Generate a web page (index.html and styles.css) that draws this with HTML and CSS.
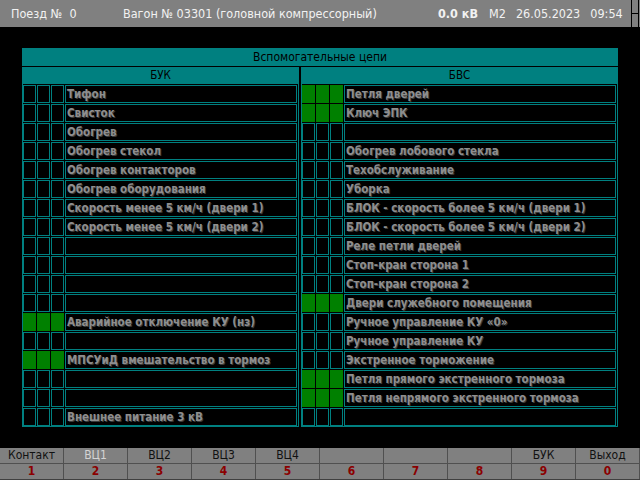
FILE: index.html
```html
<!DOCTYPE html>
<html lang="ru">
<head>
<meta charset="utf-8">
<title>Вспомогательные цепи</title>
<link rel="stylesheet" href="styles.css">
</head>
<body>
<div class="screen">
  <header class="topbar">
    <span class="train">Поезд №&nbsp; 0</span>
    <span class="wagon">Вагон № 03301 (головной компрессорный)</span>
    <span class="volt">0.0 кВ</span>
    <span class="mode">М2</span>
    <span class="date">26.05.2023</span>
    <span class="time">09:54</span>
    <span class="marker"></span>
  </header>

  <main class="panel">
    <div class="panel-title">Вспомогательные цепи</div>
    <div class="sections">
      <section class="section left">
        <div class="section-head">БУК</div>
        <div class="grid">
          <div class="c"></div><div class="c"></div><div class="c"></div><div class="t">Тифон</div>
          <div class="c"></div><div class="c"></div><div class="c"></div><div class="t">Свисток</div>
          <div class="c"></div><div class="c"></div><div class="c"></div><div class="t">Обогрев</div>
          <div class="c"></div><div class="c"></div><div class="c"></div><div class="t">Обогрев стекол</div>
          <div class="c"></div><div class="c"></div><div class="c"></div><div class="t">Обогрев контакторов</div>
          <div class="c"></div><div class="c"></div><div class="c"></div><div class="t">Обогрев оборудования</div>
          <div class="c"></div><div class="c"></div><div class="c"></div><div class="t">Скорость менее 5 км/ч (двери 1)</div>
          <div class="c"></div><div class="c"></div><div class="c"></div><div class="t">Скорость менее 5 км/ч (двери 2)</div>
          <div class="c"></div><div class="c"></div><div class="c"></div><div class="t"></div>
          <div class="c"></div><div class="c"></div><div class="c"></div><div class="t"></div>
          <div class="c"></div><div class="c"></div><div class="c"></div><div class="t"></div>
          <div class="c"></div><div class="c"></div><div class="c"></div><div class="t"></div>
          <div class="c on"></div><div class="c on"></div><div class="c on"></div><div class="t">Аварийное отключение КУ (нз)</div>
          <div class="c"></div><div class="c"></div><div class="c"></div><div class="t"></div>
          <div class="c on"></div><div class="c on"></div><div class="c on"></div><div class="t">МПСУиД вмешательство в тормоз</div>
          <div class="c"></div><div class="c"></div><div class="c"></div><div class="t"></div>
          <div class="c"></div><div class="c"></div><div class="c"></div><div class="t"></div>
          <div class="c"></div><div class="c"></div><div class="c"></div><div class="t">Внешнее питание 3 кВ</div>
        </div>
      </section>
      <section class="section right">
        <div class="section-head">БВС</div>
        <div class="grid">
          <div class="c on"></div><div class="c on"></div><div class="c on"></div><div class="t">Петля дверей</div>
          <div class="c on"></div><div class="c on"></div><div class="c on"></div><div class="t">Ключ ЭПК</div>
          <div class="c"></div><div class="c"></div><div class="c"></div><div class="t"></div>
          <div class="c"></div><div class="c"></div><div class="c"></div><div class="t">Обогрев лобового стекла</div>
          <div class="c"></div><div class="c"></div><div class="c"></div><div class="t">Техобслуживание</div>
          <div class="c"></div><div class="c"></div><div class="c"></div><div class="t">Уборка</div>
          <div class="c"></div><div class="c"></div><div class="c"></div><div class="t">БЛОК - скорость более 5 км/ч (двери 1)</div>
          <div class="c"></div><div class="c"></div><div class="c"></div><div class="t">БЛОК - скорость более 5 км/ч (двери 2)</div>
          <div class="c"></div><div class="c"></div><div class="c"></div><div class="t">Реле петли дверей</div>
          <div class="c"></div><div class="c"></div><div class="c"></div><div class="t">Стоп-кран сторона 1</div>
          <div class="c"></div><div class="c"></div><div class="c"></div><div class="t">Стоп-кран сторона 2</div>
          <div class="c on"></div><div class="c on"></div><div class="c on"></div><div class="t">Двери служебного помещения</div>
          <div class="c"></div><div class="c"></div><div class="c"></div><div class="t">Ручное управление КУ «0»</div>
          <div class="c"></div><div class="c"></div><div class="c"></div><div class="t">Ручное управление КУ</div>
          <div class="c"></div><div class="c"></div><div class="c"></div><div class="t">Экстренное торможение</div>
          <div class="c on"></div><div class="c on"></div><div class="c on"></div><div class="t">Петля прямого экстренного тормоза</div>
          <div class="c on"></div><div class="c on"></div><div class="c on"></div><div class="t">Петля непрямого экстренного тормоза</div>
          <div class="c"></div><div class="c"></div><div class="c"></div><div class="t"></div>
        </div>
      </section>
    </div>
  </main>

  <footer class="keys">
    <div class="key"><span class="lbl">Контакт</span><span class="num">1</span></div>
    <div class="key"><span class="lbl dim">ВЦ1</span><span class="num">2</span></div>
    <div class="key"><span class="lbl">ВЦ2</span><span class="num">3</span></div>
    <div class="key"><span class="lbl">ВЦ3</span><span class="num">4</span></div>
    <div class="key"><span class="lbl">ВЦ4</span><span class="num">5</span></div>
    <div class="key"><span class="lbl"></span><span class="num">6</span></div>
    <div class="key"><span class="lbl"></span><span class="num">7</span></div>
    <div class="key"><span class="lbl"></span><span class="num">8</span></div>
    <div class="key"><span class="lbl">БУК</span><span class="num">9</span></div>
    <div class="key"><span class="lbl">Выход</span><span class="num">0</span></div>
  </footer>
</div>
</body>
</html>
```

FILE: styles.css
```css
* { box-sizing: border-box; }

html, body {
  margin: 0;
  padding: 0;
  background: #000;
}

.screen {
  width: 640px;
  height: 480px;
  display: flex;
  flex-direction: column;
  background: #000;
  font-family: "DejaVu Sans", "Liberation Sans", sans-serif;
  font-stretch: condensed;
  overflow: hidden;
}

/* ---------- top bar ---------- */
.topbar {
  height: 27px;
  background: #808080;
  color: #f2f2f2;
  font-size: 12.5px;
  display: flex;
  align-items: center;
  padding-left: 11px;
  white-space: nowrap;
}
.train { width: 112px; }
.wagon { width: 315px; }
.volt { font-weight: bold; }
.mode { margin-left: 11px; }
.date { margin-left: 10px; }
.time { margin-left: 10px; }
.marker {
  margin-left: 8px;
  width: 8px;
  height: 27px;
  border-left: 1px solid #000;
  border-right: 1px solid #000;
  background: linear-gradient(#808080 13px, #000 13px, #000 14px, #808080 14px);
}

/* ---------- panel ---------- */
.panel {
  margin: 21px 0 0 22px;
  width: 596px;
}
.panel-title {
  height: 19px;
  background: #008080;
  border-bottom: 1px solid #000;
  color: #000;
  font-size: 12px;
  line-height: 18px;
  text-align: center;
}
.sections {
  display: flex;
  gap: 2px;
}
.section {
  border: 1px solid #008080;
  border-top: 0;
}
.section.left { width: 277px; }
.section.right { width: 317px; }

.section-head {
  height: 17px;
  background: #008080;
  color: #000;
  font-size: 11.5px;
  line-height: 16px;
  text-align: center;
}

.grid {
  display: grid;
  grid-template-columns: 13px 13px 13px 1fr;
  grid-auto-rows: 18px;
  gap: 1px;
  padding: 1px 1px 0 0;
}

.c {
  border: 1px solid #008080;
  background: #000;
}
.c.on {
  background: #008000;
  border-color: #008000;
}
.t {
  border: 1px solid #008080;
  background: #000;
  color: #8e8e8e;
  font-size: 11.5px;
  font-weight: bold;
  line-height: 16px;
  padding-left: 1px;
  white-space: nowrap;
  overflow: hidden;
  text-shadow: 1px 1px 0 #3a3a3a;
}

/* ---------- bottom keys ---------- */
.keys {
  margin-top: auto;
  height: 32px;
  display: grid;
  grid-template-columns: repeat(10, 64px);
  background: #808080;
  border-bottom: 1px solid #404040;
}
.key {
  display: flex;
  flex-direction: column;
  border-right: 1px solid #505050;
}
.lbl {
  height: 16px;
  border-bottom: 1px solid #505050;
  color: #111;
  font-size: 12px;
  line-height: 15px;
  text-align: center;
}
.lbl.dim { color: #d4d4d4; }
.num {
  flex: 1;
  color: #8b0000;
  font-size: 12px;
  font-weight: bold;
  line-height: 15px;
  text-align: center;
}
```
